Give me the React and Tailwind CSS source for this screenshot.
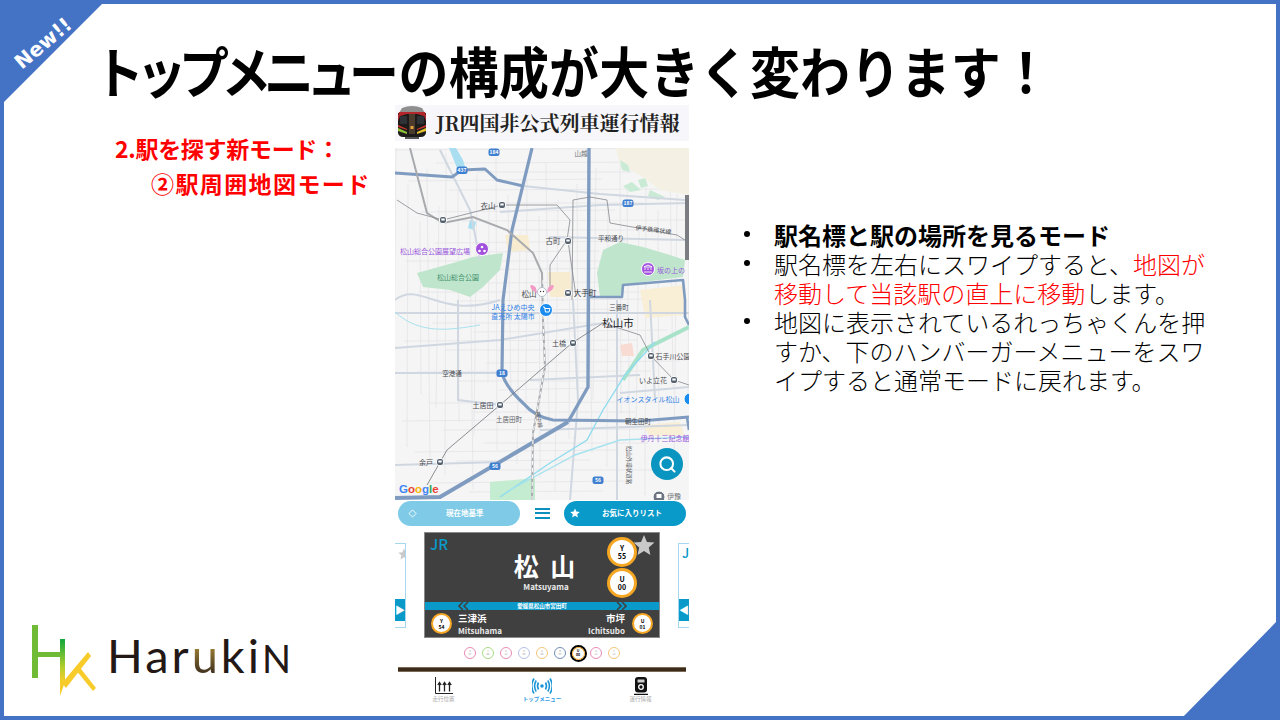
import { Search } from "lucide-react";

const stations = [
    [502, 205], [443, 220], [568, 241], [568, 293], [573, 343], [651, 356], [674, 380], [500, 405], [440, 462],
];
const shields = [
    [494, 152, "184"], [462, 170, "437"], [628, 203, "187"], [502, 373, "18"], [495, 466, "56"], [598, 480, "56"],
];
const labels = [
    [488, 206, "衣山", "#4a4d52", 7.5],
    [553, 241, "古町", "#4a4d52", 7.5],
    [585, 293, "大手町", "#303134", 7.5],
    [529, 294, "松山", "#4a4d52", 7.5],
    [581, 153, "山越", "#70757a", 6.5],
    [611, 238, "平和通り", "#4a4d52", 6.5],
    [619, 307, "三番町", "#4a4d52", 6.5],
    [618, 324, "松山市", "#202124", 10.5],
    [559, 343, "土橋", "#4a4d52", 7],
    [673, 356, "石手川公園", "#4a4d52", 7],
    [653, 380, "いよ立花", "#4a4d52", 7],
    [648, 399, "イオンスタイル松山", "#2f7fe6", 7],
    [452, 373, "空港通", "#4a4d52", 6.5],
    [483, 405, "土居田", "#4a4d52", 7],
    [509, 419, "土居田町", "#5f6368", 6.5],
    [638, 421, "朝生田町", "#4a4d52", 6.5],
    [665, 438, "伊丹十三記念館", "#9a56dc", 7],
    [426, 462, "余戸", "#4a4d52", 7],
    [513, 307, "JAえひめ中央", "#2f7fe6", 7],
    [513, 316, "直売所 太陽市", "#2f7fe6", 7],
    [435, 251, "松山総合公園展望広場", "#9a56dc", 7],
    [458, 277, "松山総合公園", "#3f8f6c", 7],
    [671, 270, "坂の上の", "#9a56dc", 7],
];
const dots = [
    ["S", "07", "#e88ab4"], ["T", "08", "#a4dc84"], ["K", "14", "#e88ab4"], ["S", "09", "#b7bfe8"], ["U", "05", "#f5c67a"],
    ["B", "03", "#6f8fb5"], ["U", "00", "#f5a623"], ["S", "12", "#e88ab4"], ["Y", "14", "#f5c67a"],
];

function MapDrawing() {
    const fine = [];
    for (let i = 0; i < 30; i++) {
        const x = 396 + i * 10 + (i * 7) % 5;
        fine.push(<line key={"v" + i} x1={x} y1={148 + (i * 37) % 90} x2={x - 3 + (i % 4) * 2} y2={500 - (i * 53) % 120} stroke="#e6e7ea" strokeWidth="0.9" />);
    }
    for (let i = 0; i < 36; i++) {
        const y = 150 + i * 10 + (i * 3) % 4;
        fine.push(<line key={"h" + i} x1={395 + (i * 41) % 110} y1={y} x2={689 - (i * 29) % 100} y2={y - 2 + (i % 3)} stroke="#e6e7ea" strokeWidth="0.9" />);
    }
    return (
        <svg viewBox="395 148 294 352" className="block w-[294px] h-[352px]">
            <rect x="395" y="148" width="294" height="352" fill="#f5f5f5" />
            {fine}
            <polygon points="616,148 689,148 689,195 660,190 640,175 620,165" fill="#f4f1e4" />
            <polygon points="505,235 528,235 530,250 508,252" fill="#f8ecd0" />
            <polygon points="548,272 570,272 572,297 550,297" fill="#f8ecd0" />
            <polygon points="640,290 685,285 685,315 645,318" fill="#f9efd6" />
            <polygon points="620,345 632,343 634,356 622,356" fill="#f8dcd4" />
            <polygon points="643,425 680,422 684,435 650,436" fill="#f8efd6" />
            <polygon points="417,273 453,263 473,257 503,253 500,270 483,287 470,297 450,290 423,287" fill="#bfe6cc" />
            <polygon points="603,250 620,242 643,247 670,255 685,260 683,277 643,282 623,285 620,297 600,297 597,273" fill="#bfe6cc" />
            <polygon points="449,148 456,148 463,160 466,170 457,168" fill="#a8def0" />
            <polygon points="620,160 628,165 630,172 622,170" fill="#c9ebd6" />
            <polygon points="638,180 645,178 648,186 641,188" fill="#c9ebd6" />
            <polygon points="623,186 632,182 641,190 630,192" fill="#c9ebd6" />
            <polygon points="650,190 665,197 658,200 648,196" fill="#c9ebd6" />
            <polygon points="470,220 476,222 474,230 468,228" fill="#a8def0" />
            <polygon points="490,482 535,478 535,500 490,500" fill="#c4ecd0" />

            <g fill="none" stroke="#d0d7e0" strokeWidth="2">
                <path d="M523 186 L600 194 L685 200" />
                <path d="M500 212 L600 205 L689 203" />
                <path d="M550 237 L685 240" />
                <path d="M395 348 L500 340 L603 323" />
                <path d="M395 313 L689 313" />
                <path d="M395 373 L503 373" />
                <path d="M620 393 L689 387" />
                <path d="M458 300 L458 400 L500 405" />
                <path d="M617 300 L617 500" />
                <path d="M573 300 L578 400 L570 500" />
                <path d="M395 465 L500 462" />
                <path d="M395 300 C420 280 440 320 500 300" />
                <path d="M440 150 L470 210 L480 260" />
                <path d="M530 380 L640 375" />
                <path d="M540 430 L689 425" />
                <path d="M650 300 L655 400" />
            </g>
            <g fill="none">
                <path d="M689 327 L643 350 L623 380" stroke="#a8e2c8" strokeWidth="4" />
                <path d="M655 342 L625 375 L603 410 L587 440 L550 463 L500 497" stroke="#8fdcee" strokeWidth="1.4" />
                <path d="M689 437 L620 440 L575 455 L510 490" stroke="#a8e2ee" strokeWidth="1.4" />
                <path d="M395 312 C420 335 450 330 480 325" stroke="#a8e2ee" strokeWidth="1" />
            </g>
            <g fill="none" stroke="#7f9cc0" strokeLinejoin="round">
                <path d="M395 173 L452 177 L462 170 L485 169 L497 180 L523 186" strokeWidth="3" />
                <path d="M532 148 L512 230 L503 300 L502 372 Q504 385 523 403 Q535 417 553 420 L640 421 L689 417" strokeWidth="3.2" />
                <path d="M589 148 L588 387 L568 422" strokeWidth="3.4" />
                <path d="M568 422 L440 497 L395 498" strokeWidth="4" />
                <path d="M590 297 L622 297 L623 285 L683 280 L685 300 L685 317 L689 325" strokeWidth="2.6" />
                <path d="M687 417 L689 430" strokeWidth="2.6" />
            </g>
            <g fill="none">
                <path d="M410 148 L427 213 L443 223 L473 217 L507 230 L533 253 L542 273 L543 320 L545 367 L533 433 L532 500" stroke="#a8aaae" strokeWidth="2" />
                <path d="M543 280 L543 320 L545 367 L533 433 L532 500" stroke="#ffffff" strokeWidth="1" strokeDasharray="4 3" />
                <path d="M397 200 L417 213 L443 220 L502 205 L557 205 L570 220 L567 240 L550 265 L550 290" stroke="#85888e" strokeWidth="0.8" />
                <path d="M572 300 L573 200 L590 197 L607 200 L610 223 L677 235 L685 240" stroke="#85888e" strokeWidth="0.8" />
                <path d="M603 323 L572 343 L500 405 L447 450 L427 485" stroke="#6f7278" strokeWidth="0.8" />
                <path d="M603 323 L640 335 L651 356 L674 380 L689 385" stroke="#85888e" strokeWidth="0.8" />
                <path d="M568 241 L576 296" stroke="#85888e" strokeWidth="0.8" />
            </g>
            {stations.map((s) => (
                <g key={s[0] + "-" + s[1]}>
                    <rect x={s[0] - 3.5} y={s[1] - 3.5} width="7" height="7" rx="2.5" fill="#55606e" stroke="#fff" strokeWidth="1" />
                    <rect x={s[0] - 1.7} y={s[1] - 1.5} width="3.4" height="2" fill="#fff" />
                </g>
            ))}
            {shields.map((s) => (
                <g key={s[0] + "-" + s[1]}>
                    <rect x={s[0] - 5.5} y={s[1] - 3.5} width="11" height="7.5" rx="2.5" fill="#3f7fd0" />
                    <text x={s[0]} y={s[1] + 2} textAnchor="middle" fontSize="5" fontWeight="700" fill="#fff">{s[2]}</text>
                </g>
            ))}
            {labels.map((l) => (
                <text key={l[2]} x={l[0]} y={l[1] + 2.5} textAnchor="middle" fontSize={l[4]} fill={l[3]}>{l[2]}</text>
            ))}
            <text transform="translate(653 232) rotate(7)" textAnchor="middle" fontSize="6" fill="#4a4d52">伊予鉄環状線</text>
            <text transform="translate(627 465) rotate(90)" textAnchor="middle" fontSize="5.5" fill="#5f6368">松山外環状道路</text>
            <text transform="translate(537 420) rotate(80)" textAnchor="middle" fontSize="5.5" fill="#5f6368">郡中線</text>

            <circle cx="482" cy="249" r="6.5" fill="#a14fdc" stroke="#fff" />
            <circle cx="482" cy="247" r="1.3" fill="#fff" /><circle cx="479.5" cy="251" r="1.3" fill="#fff" /><circle cx="484.5" cy="251" r="1.3" fill="#fff" />
            <circle cx="648" cy="269" r="6.5" fill="#a14fdc" stroke="#fff" />
            <path d="M644 272 L652 272 M645 270 L645 268 M648 270 L648 268 M651 270 L651 268 M644 267 L648 265 L652 267 Z" stroke="#fff" strokeWidth="0.9" fill="none" />
            <circle cx="546" cy="310" r="6.5" fill="#1a8cf0" stroke="#fff" />
            <path d="M543 307 L544.5 307 L545.5 312 L549 312 L550 308.5 L545 308.5" stroke="#fff" strokeWidth="1" fill="none" />
            <circle cx="690" cy="399" r="6" fill="#1a8cf0" stroke="#fff" />
            <circle cx="659" cy="497" r="6" fill="#6b7480" stroke="#fff" />
            <rect x="656.5" y="494" width="5" height="4" fill="#fff" />
            <text x="667" y="499" fontSize="7" fill="#70757a">伊豫</text>

            <path d="M536 288 C532 283 528 285 532 290 L537 293 Z" fill="#f29ac4" />
            <path d="M548 288 C552 283 556 285 552 290 L547 293 Z" fill="#f29ac4" />
            <circle cx="542" cy="292" r="4.5" fill="#fff" stroke="#8a9bb0" strokeWidth="0.6" />
            <circle cx="540.5" cy="291.5" r="0.7" fill="#333" /><circle cx="543.5" cy="291.5" r="0.7" fill="#333" />

            <rect x="685" y="195" width="4" height="65" fill="#7a7d82" />
            <text x="399" y="493" fontSize="11.5" fontWeight="700" fontFamily="Liberation Sans, sans-serif">
                <tspan fill="#4285f4">G</tspan><tspan fill="#ea4335">o</tspan><tspan fill="#f5b400">o</tspan><tspan fill="#4285f4">g</tspan><tspan fill="#34a853">l</tspan><tspan fill="#ea4335">e</tspan>
            </text>
        </svg>
    );
}

function TrainIcon() {
    return (
        <svg viewBox="0 0 30 36" className="w-[30px] h-[36px] shrink-0">
            <path d="M5 3 Q15 -1 25 3 L28 8 L2 8 Z" fill="#8f8f8f" />
            <path d="M1 8 L29 8 L29 28 Q28 32 24 32 L6 32 Q2 32 1 28 Z" fill="#1d1b1a" />
            <path d="M2 7 L28 7 L29 11 L29 16 L27 11 L20 9 L10 9 L3 11 L1 16 L1 11 Z" fill="#b3262b" />
            <rect x="3" y="11" width="7" height="8" rx="1" fill="#2c3236" />
            <rect x="20" y="11" width="7" height="8" rx="1" fill="#2c3236" />
            <rect x="12" y="9" width="6" height="20" fill="#4b3b2c" />
            <rect x="13.5" y="21" width="3" height="3" fill="#e5a13a" />
            <path d="M1 23 L10 27 L10 29 L1 26 Z" fill="#8fc03a" />
            <path d="M29 23 L20 27 L20 29 L29 26 Z" fill="#e0c02f" />
            <path d="M1 20 L10 24 L10 25 L1 22 Z" fill="#c8352c" />
            <path d="M29 20 L20 24 L20 25 L29 22 Z" fill="#c8352c" />
            <rect x="8" y="32" width="14" height="2" fill="#555" />
        </svg>
    );
}

function StationCircle({ line, num, big }) {
    return (
        <div className={big
            ? "w-[30px] h-[30px] rounded-full bg-white border-[3px] border-[#f5a623] flex flex-col items-center justify-center text-black font-bold text-[7px] leading-[8px]"
            : "w-[21px] h-[21px] rounded-full bg-white border-[2px] border-[#f5a623] flex flex-col items-center justify-center text-black font-bold text-[5px] leading-[6px] shrink-0"}>
            <span>{line}</span>
            <span>{num}</span>
        </div>
    );
}

function SideCard({ flip }) {
    return (
        <div className={flip
            ? "w-[11px] h-[85px] mt-[11px] border border-r-0 border-[#a5d8ee] bg-white flex flex-col overflow-hidden"
            : "w-[11px] h-[85px] mt-[11px] border border-l-0 border-[#a5d8ee] bg-white flex flex-col items-end overflow-hidden"}>
            {flip
                ? <span className="text-[13px] leading-[18px] pl-[3px] text-[#0a9ac9] font-medium">J</span>
                : <svg viewBox="0 0 24 24" className="w-[12px] h-[12px] mt-[4px] -mr-[5px] shrink-0"><path d="M12 1 L15.2 8.6 L23.4 9.3 L17.2 14.7 L19 22.8 L12 18.5 L5 22.8 L6.8 14.7 L0.6 9.3 L8.8 8.6 Z" fill="#c9c9c9" /></svg>}
            <div className={flip
                ? "w-full mt-auto mb-[6px] h-[22px] bg-[#0a9ac9] flex items-center justify-start text-white text-[10px] leading-none"
                : "w-full mt-auto mb-[6px] h-[22px] bg-[#0a9ac9] flex items-center justify-end text-white text-[10px] leading-none"}>
                {flip ? "◀" : "▶"}
            </div>
        </div>
    );
}

function StationSign() {
    return (
        <div className="w-[236px] h-[106px] bg-[#404040] border border-[#8a8a8a] flex flex-col text-white relative">
            <div className="h-[69px] flex relative">
                <span className="absolute left-[5px] top-[1px] text-[15px] leading-[20px] font-medium text-[#0a9ac9]">JR</span>
                <div className="flex-1 flex flex-col items-center pt-[17px] pl-[60px]">
                    <span className="text-[25px] leading-[31px] font-bold tracking-[3px]">松 山</span>
                    <span className="text-[8px] leading-[10px] font-bold text-[#e8e8e8] mt-[1px]">Matsuyama</span>
                </div>
                <div className="w-[52px] flex flex-col gap-[1px] pt-[4px] shrink-0">
                    <StationCircle line="Y" num="55" big />
                    <StationCircle line="U" num="00" big />
                </div>
                <svg viewBox="0 0 24 24" className="absolute right-[4px] top-[1px] w-[22px] h-[22px]">
                    <path d="M12 1 L15.2 8.6 L23.4 9.3 L17.2 14.7 L19 22.8 L12 18.5 L5 22.8 L6.8 14.7 L0.6 9.3 L8.8 8.6 Z" fill="#c9c9c9" />
                </svg>
            </div>
            <div className="h-[8px] bg-[#0a9ac9] flex items-center justify-center relative">
                <span className="text-[5.5px] leading-[8px] font-bold text-white">愛媛県松山市宮田町</span>
                <svg viewBox="0 0 12 8" className="absolute left-[33px] top-0 w-[12px] h-[8px]">
                    <path d="M5 0 L1 4 L5 8 M10 0 L6 4 L10 8" stroke="#404040" strokeWidth="1.6" fill="none" />
                </svg>
                <svg viewBox="0 0 12 8" className="absolute right-[32px] top-0 w-[12px] h-[8px]">
                    <path d="M2 0 L6 4 L2 8 M7 0 L11 4 L7 8" stroke="#404040" strokeWidth="1.6" fill="none" />
                </svg>
            </div>
            <div className="flex-1 flex items-center px-[6px]">
                <StationCircle line="Y" num="54" />
                <div className="ml-[6px] flex flex-col">
                    <span className="text-[9.5px] leading-[12px] font-bold">三津浜</span>
                    <span className="text-[8px] leading-[10px] font-bold mt-[2px] text-[#e8e8e8]">Mitsuhama</span>
                </div>
                <div className="ml-auto mr-[7px] flex flex-col items-end">
                    <span className="text-[9.5px] leading-[12px] font-bold">市坪</span>
                    <span className="text-[8px] leading-[10px] font-bold mt-[2px] text-[#e8e8e8]">Ichitsubo</span>
                </div>
                <StationCircle line="U" num="01" />
            </div>
        </div>
    );
}

function ChartIcon() {
    return (
        <svg viewBox="0 0 20 18" className="w-[20px] h-[18px]">
            <path d="M1.5 0 L1.5 16.5 L19 16.5" stroke="#222" strokeWidth="1" fill="none" />
            <path d="M5.5 14.5 L5.5 6 M3.8 8 L5.5 5.5 L7.2 8 M10.5 14.5 L10.5 6 M8.8 8 L10.5 5.5 L12.2 8 M15.5 14.5 L15.5 6 M13.8 8 L15.5 5.5 L17.2 8" stroke="#222" strokeWidth="1.3" fill="none" />
        </svg>
    );
}

function WaveIcon() {
    return (
        <svg viewBox="0 0 20 18" className="w-[20px] h-[18px]">
            <g stroke="#1b95d6" strokeWidth="1.6" fill="none">
                <path d="M6.5 5.5 Q4.5 9 6.5 12.5 M13.5 5.5 Q15.5 9 13.5 12.5" />
                <path d="M4.2 3.5 Q1 9 4.2 14.5 M15.8 3.5 Q19 9 15.8 14.5" />
                <path d="M2 1.5 Q-2.5 9 2 16.5 M18 1.5 Q22.5 9 18 16.5" />
            </g>
            <circle cx="10" cy="9" r="1.8" fill="#1b95d6" />
        </svg>
    );
}

function TrainTabIcon() {
    return (
        <svg viewBox="0 0 14 18" className="w-[14px] h-[18px]">
            <rect x="1" y="0" width="12" height="15.5" rx="3" fill="#111" />
            <rect x="3.5" y="2.5" width="7" height="3" rx="0.5" fill="#cfcfcf" />
            <circle cx="7" cy="10" r="2.3" fill="none" stroke="#fff" strokeWidth="1.3" />
            <path d="M0 17.5 L14 17.5" stroke="#111" strokeWidth="1.5" />
        </svg>
    );
}

function Phone() {
    return (
        <div className="w-[294px] shrink-0 flex flex-col">
            <div className="h-[36px] bg-[#f7f7fb] flex items-center pl-[2px]">
                <TrainIcon />
                <span className="ml-[9px] text-[20px] leading-[36px] text-[#222] whitespace-nowrap font-bold font-['Noto_Serif_CJK_JP','Liberation_Serif','Noto_Sans_CJK_JP',serif]">JR四国非公式列車運行情報</span>
            </div>
            <div className="relative mt-[7px] h-[352px]">
                <MapDrawing />
                <div className="absolute right-[6px] top-[300px] w-[32px] h-[32px] rounded-full bg-[#0a95c0] flex items-center justify-center text-white">
                    <Search size={19} strokeWidth={2.6} />
                </div>
            </div>
            <div className="flex items-center justify-between px-[3px] h-[26px]">
                <div className="w-[122px] h-[25px] rounded-full bg-[#7fcbe7] flex items-center pl-[10px] text-white">
                    <svg viewBox="0 0 10 10" className="w-[9px] h-[9px]"><path d="M5 1 L9 5 L5 9 L1 5 Z" fill="none" stroke="#fff" /></svg>
                    <span className="ml-[29px] text-[7.5px] font-bold">現在地基準</span>
                </div>
                <div className="flex flex-col gap-[2.5px] w-[15px]">
                    <div className="h-[2px] bg-[#0a8fbf]"></div>
                    <div className="h-[2px] bg-[#0a8fbf]"></div>
                    <div className="h-[2px] bg-[#0a8fbf]"></div>
                </div>
                <div className="w-[122px] h-[25px] rounded-full bg-[#0a9ac9] flex items-center pl-[6px] text-white">
                    <svg viewBox="0 0 24 24" className="w-[10px] h-[10px]"><path d="M12 1 L15.2 8.6 L23.4 9.3 L17.2 14.7 L19 22.8 L12 18.5 L5 22.8 L6.8 14.7 L0.6 9.3 L8.8 8.6 Z" fill="#fff" /></svg>
                    <span className="ml-[22px] text-[7.5px] font-bold">お気に入りリスト</span>
                </div>
            </div>
            <div className="mt-[6px] flex justify-between">
                <SideCard />
                <StationSign />
                <SideCard flip />
            </div>
            <div className="mt-[6px] h-[18px] flex items-center justify-center gap-[6px]">
                {dots.map((d, i) => (
                    <div key={i} className={i == 6
                        ? "w-[17px] h-[17px] -mx-[2.5px] rounded-full bg-white border-[2px] border-black flex flex-col items-center justify-center text-[3.5px] leading-[4px] font-bold outline outline-[1px] outline-[#f5a623] -outline-offset-[3px]"
                        : "w-[12px] h-[12px] rounded-full bg-white border flex flex-col items-center justify-center text-[2.5px] leading-[3px] text-[#999]"}
                        style={i == 6 ? undefined : { borderColor: d[2] }}>
                        <span>{d[0]}</span>
                        <span>{d[1]}</span>
                    </div>
                ))}
            </div>
            <div className="mt-[5px] mx-[3px] h-[5px] bg-[#3d2b1a] border-y border-[#7a6a58]"></div>
            <div className="mt-[5px] grid grid-cols-3 text-[5.5px] leading-[7px]">
                <div className="flex flex-col items-center text-[#a8a8a8] gap-[1px] pr-[1px]"><ChartIcon /><span>走行位置</span></div>
                <div className="flex flex-col items-center text-[#2f9ce8] font-bold gap-[1px]"><WaveIcon /><span>トップメニュー</span></div>
                <div className="flex flex-col items-center text-[#a8a8a8] gap-[1px] pl-[1px]"><TrainTabIcon /><span>運行情報</span></div>
            </div>
        </div>
    );
}

function Logo() {
    return (
        <div className="flex items-start">
            <svg viewBox="30 624 68 74" className="w-[68px] h-[74px] shrink-0">
                <defs>
                    <linearGradient id="hkbar" x1="0" y1="0" x2="0" y2="1">
                        <stop offset="0" stopColor="#10a83c" />
                        <stop offset="0.5" stopColor="#b5cf2c" />
                        <stop offset="0.75" stopColor="#f7cc2a" />
                    </linearGradient>
                </defs>
                <rect x="32" y="625" width="6" height="53" fill="#6fbb35" />
                <rect x="32" y="652" width="30" height="5" fill="#6fbb35" />
                <polygon points="60,639 65,639 65,682 60,696" fill="url(#hkbar)" />
                <polygon points="62,683 88,652 91,656 66,688" fill="#f7cc2a" />
                <polygon points="75,669 78,665 96,688 93,691" fill="#f7cc2a" />
            </svg>
            <div className="ml-[9px] mt-[2px] text-[47px] leading-[58px] tracking-[3px] text-[#231815] whitespace-nowrap font-['Lato','Liberation_Sans',sans-serif] font-normal">
                Har<span className="bg-linear-to-b from-[#e8c23a] to-[#231815] bg-clip-text text-transparent">u</span>ki<span className="text-[38px]">N</span>
            </div>
        </div>
    );
}

function Bullet() {
    return <span className="absolute -left-[30px] top-[11px] w-[6px] h-[6px] rounded-full bg-black"></span>;
}

export default function App() {
    return (
        <div className="relative w-[1280px] h-[720px] overflow-hidden bg-white border-4 border-[#4472c4] flex flex-col font-['Noto_Sans_CJK_JP','Liberation_Sans',sans-serif]">
            <div className="absolute -left-[4px] -top-[4px] w-[106px] h-[106px] bg-[#4472c4] [clip-path:polygon(0_0,100%_0,0_100%)]"></div>
            <div className="absolute left-[4px] top-[27px] w-[70px] text-center -rotate-[40deg] text-white font-bold text-[20px] leading-[24px] font-['DejaVu_Sans',sans-serif]">New!!</div>
            <div className="absolute -right-[4px] -bottom-[4px] w-[100px] h-[102px] bg-[#4472c4] [clip-path:polygon(100%_0,100%_100%,0_100%)]"></div>

            <div className="h-[101px] pl-[90px] pt-[32px] shrink-0">
                <h1 className="text-[50px] leading-[60px] font-bold text-black whitespace-nowrap scale-y-[1.1] origin-top">
                    <span className="tracking-[-7.5px]">トップメニュー</span><span className="ml-[7px] tracking-[0.2px]">の構成が大きく変わります！</span>
                </h1>
            </div>
            <div className="flex-1 flex min-h-0">
                <div className="w-[391px] shrink-0 flex flex-col">
                    <div className="pl-[111px] pt-[26px] text-[#ff0000] font-bold text-[23px] leading-[35px] whitespace-nowrap">
                        <p className="tracking-[-0.3px]">2.駅を探す新モード：</p>
                        <p className="pl-[36px] tracking-[1.4px]">②駅周囲地図モード</p>
                    </div>
                    <div className="mt-auto pl-[26px] pb-[18px]"><Logo /></div>
                </div>
                <Phone />
                <div className="flex-1 pl-[85px] pt-[115px]">
                    <ul className="text-[24px] leading-[29px] text-black w-[440px]">
                        <li className="relative font-bold"><Bullet />駅名標と駅の場所を見るモード</li>
                        <li className="relative font-light"><Bullet />駅名標を左右にスワイプすると、<span className="text-[#ff0000]">地図が<br />移動して当該駅の直上に移動</span>します。</li>
                        <li className="relative font-light"><Bullet />地図に表示されているれっちゃくんを押<br />すか、下のハンバーガーメニューをスワ<br />イプすると通常モードに戻れます。</li>
                    </ul>
                </div>
            </div>
        </div>
    );
}
